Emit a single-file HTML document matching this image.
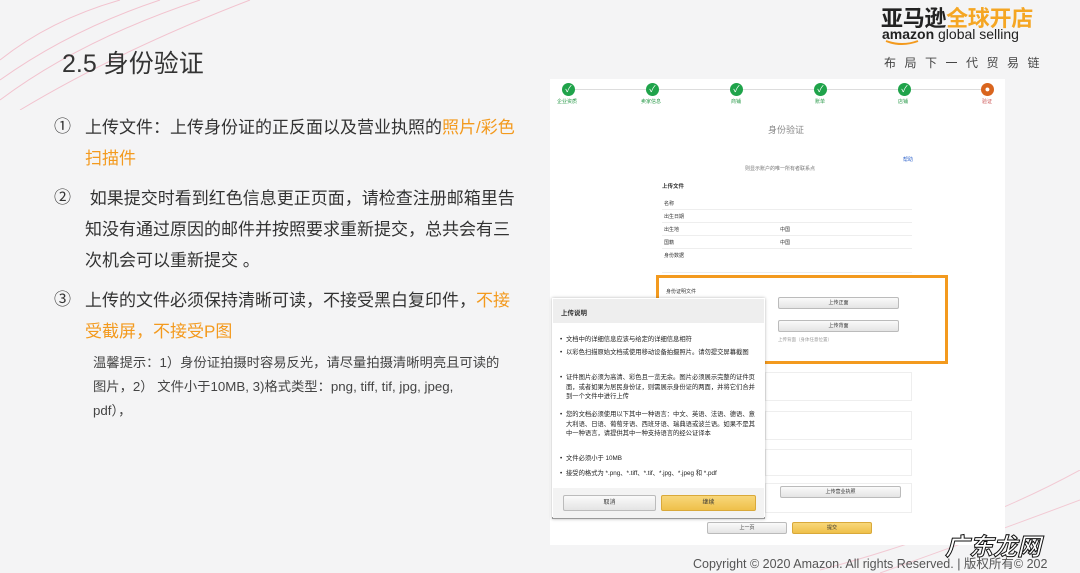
<!DOCTYPE html>
<html><head><meta charset="utf-8"><style>
*{margin:0;padding:0;box-sizing:border-box}
body{width:1080px;height:573px;overflow:hidden;background:#f4f4f5;font-family:"Liberation Sans","Noto Sans CJK SC",sans-serif;position:relative;color:#333}
.a{position:absolute;white-space:nowrap}
.t{font-size:17px;color:#333}
.o{color:#f39a1e}
.s{font-size:13.3px;color:#444}
.st{position:absolute;top:83px;width:13px;height:13px;border-radius:50%;background:#1fa34a;color:#fff;font-size:9px;text-align:center;line-height:13px}
.sl{position:absolute;top:98px;font-size:5px;color:#2a9a4a}
.row{position:absolute;left:662px;width:250px;height:13px;border-bottom:1px solid #eee;font-size:5px;color:#333;padding:3px 2px}
.row:before{content:"";position:absolute;left:0;top:0;width:100px;height:13px;background:#f0f0f0;z-index:-1}
.btn{position:absolute;height:12px;border:1px solid #bbb;border-radius:2px;background:linear-gradient(#fafafa,#e4e4e4);font-size:5px;text-align:center;line-height:10px}
.y{background:linear-gradient(#f8d77a,#efc04a);border-color:#d9a93a}
.m{font-size:6.3px;color:#222;line-height:9.5px;position:absolute;left:560px;width:200px;white-space:normal;padding-left:6px}
.m:before{content:"•";position:absolute;left:0}
</style></head><body>
<svg class="a" style="left:0;top:0" width="260" height="110"><g stroke="#f2b8c6" stroke-width="1" fill="none" opacity=".8"><path d="M0 100 Q80 40 200 0"/><path d="M0 80 Q70 30 160 0"/><path d="M20 110 Q120 50 250 0"/><path d="M0 60 Q50 20 120 0"/></g></svg>
<svg class="a" style="top:470px;left:820px" width="260" height="103"><g stroke="#f2b8c6" stroke-width="1" fill="none" opacity=".7"><path d="M0 100 Q150 60 260 0"/><path d="M60 103 Q180 60 260 30"/></g></svg>
<div class="a" style="left:62px;top:44px;font-size:25px;color:#333">2.5 身份验证</div>
<div class="a" style="left:881px;top:1px;font-size:22px;font-weight:bold;color:#222;letter-spacing:-0.3px">亚马逊<span style="color:#f5a623">全球开店</span></div>
<div class="a" style="left:882px;top:26px;font-size:14px;color:#222"><b>amazon</b> global selling</div>
<svg class="a" style="left:884px;top:39px" width="40" height="8"><path d="M2 2 Q18 8 34 2" stroke="#f39a1e" stroke-width="2" fill="none"/></svg>
<div class="a" style="left:884px;top:54px;font-size:12px;color:#444;letter-spacing:8.5px">布局下一代贸易链</div>

<div class="a t" style="left:54px;top:112px">①</div>
<div class="a t" style="left:85px;top:112px;line-height:31px">上传文件：上传身份证的正反面以及营业执照的<span class="o">照片/彩色</span><br><span class="o">扫描件</span></div>
<div class="a t" style="left:54px;top:183px">②</div>
<div class="a t" style="left:85px;top:183px;line-height:31px">&nbsp;如果提交时看到红色信息更正页面，请检查注册邮箱里告<br>知没有通过原因的邮件并按照要求重新提交，总共会有三<br>次机会可以重新提交 。</div>
<div class="a t" style="left:54px;top:285px">③</div>
<div class="a t" style="left:85px;top:285px;line-height:31px">上传的文件必须保持清晰可读，不接受黑白复印件，<span class="o">不接</span><br><span class="o">受截屏，不接受P图</span></div>
<div class="a s" style="left:93px;top:351px;line-height:24px">温馨提示：1）身份证拍摄时容易反光，请尽量拍摄清晰明亮且可读的<br>图片，2） 文件小于10MB, 3)格式类型：png, tiff, tif, jpg, jpeg,<br>pdf），</div>

<div class="a" style="left:550px;top:79px;width:455px;height:466px;background:#fff"></div>
<div class="a" style="left:568px;top:89px;width:420px;height:1px;background:#ddd"></div>
<div class="st" style="left:562px">✓</div><div class="st" style="left:646px">✓</div><div class="st" style="left:730px">✓</div><div class="st" style="left:814px">✓</div><div class="st" style="left:898px">✓</div><div class="st" style="left:981px;background:#d9651e">●</div>
<div class="sl" style="left:557px">企业资质</div><div class="sl" style="left:641px">卖家信息</div><div class="sl" style="left:731px">商铺</div><div class="sl" style="left:815px">账单</div><div class="sl" style="left:898px">店铺</div><div class="sl" style="left:982px;color:#c55">验证</div>
<div class="a" style="left:768px;top:123px;font-size:9px;color:#888">身份验证</div>
<div class="a" style="left:903px;top:156px;font-size:5px;color:#36c">帮助</div>
<div class="a" style="left:745px;top:165px;font-size:5px;color:#777">则显示账户的唯一所有者联系点</div>
<div class="a" style="left:662px;top:182px;font-size:5.5px;font-weight:bold">上传文件</div>
<div class="row" style="top:197px">名称</div><div class="row" style="top:210px">出生日期</div><div class="row" style="top:223px">出生地<span style="position:absolute;left:118px">中国</span></div><div class="row" style="top:236px">国籍<span style="position:absolute;left:118px">中国</span></div><div class="row" style="top:249px;height:24px">身份数据</div>
<div class="a" style="left:656px;top:275px;width:292px;height:89px;border:3px solid #f39a1e"></div>
<div class="a" style="left:666px;top:288px;font-size:5px">身份证明文件</div>
<div class="btn" style="left:778px;top:297px;width:121px">上传正面</div>
<div class="btn" style="left:778px;top:320px;width:121px">上传背面</div>
<div class="a" style="left:778px;top:337px;font-size:4.5px;color:#999">上传背面（身体任意位置）</div>
<div class="a" style="left:765px;top:372px;width:147px;height:29px;border:1px solid #eee"></div>
<div class="a" style="left:765px;top:411px;width:147px;height:29px;border:1px solid #eee"></div>
<div class="a" style="left:765px;top:449px;width:147px;height:27px;border:1px solid #eee"></div>
<div class="a" style="left:765px;top:483px;width:147px;height:30px;border:1px solid #eee"></div>
<div class="btn" style="left:780px;top:486px;width:121px">上传营业执照</div>
<div class="btn" style="left:707px;top:522px;width:80px">上一页</div>
<div class="btn y" style="left:792px;top:522px;width:80px">提交</div>

<div class="a" style="left:552px;top:298px;width:213px;height:221px;background:#fff;border-bottom:2px solid #999;box-shadow:0 0 3px rgba(0,0,0,.3)"></div>
<div class="a" style="left:553px;top:299px;width:211px;height:24px;background:#eee;font-size:6.5px;font-weight:bold;padding:8px 8px">上传说明</div>
<div class="m" style="top:335px">文档中的详细信息应该与给定的详细信息相符</div>
<div class="m" style="top:348px">以彩色扫描原始文档或使用移动设备拍摄照片。请勿提交屏幕截图</div>
<div class="m" style="top:373px">证件图片必须为高清、彩色且一览无余。图片必须展示完整的证件页面，或者如果为居民身份证，则需展示身份证的两面，并将它们合并到一个文件中进行上传</div>
<div class="m" style="top:410px">您的文档必须使用以下其中一种语言：中文、英语、法语、德语、意大利语、日语、葡萄牙语、西班牙语、瑞典语或波兰语。如果不是其中一种语言，请提供其中一种支持语言的经公证译本</div>
<div class="m" style="top:454px">文件必须小于 10MB</div>
<div class="m" style="top:469px">接受的格式为 *.png、*.tiff、*.tif、*.jpg、*.jpeg 和 *.pdf</div>
<div class="a" style="left:553px;top:488px;width:211px;height:30px;background:#f3f3f3"></div>
<div class="btn" style="left:563px;top:495px;width:93px;height:16px;line-height:14px;font-size:6px">取消</div>
<div class="btn y" style="left:661px;top:495px;width:95px;height:16px;line-height:14px;font-size:6px">继续</div>

<div class="a" style="left:693px;top:553px;font-size:12.5px;color:#555">Copyright © 2020 Amazon. All rights Reserved. | 版权所有© 202</div>
<div class="a" style="left:945px;top:527px;font-size:24px;font-style:italic;font-weight:bold;color:#fff;-webkit-text-stroke:1px #111">广东龙网</div>
</body></html>
